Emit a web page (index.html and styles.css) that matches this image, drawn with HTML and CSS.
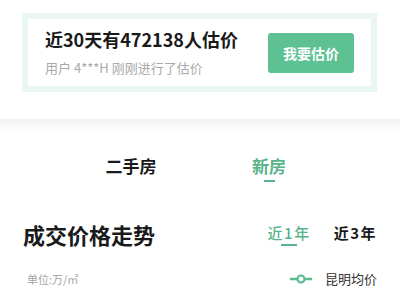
FILE: index.html
```html
<!DOCTYPE html>
<html lang="zh-CN">
<head>
<meta charset="utf-8">
<link rel="stylesheet" href="styles.css">
</head>
<body>
<div class="top">
  <div class="card">
    <div class="card-text">
      <div class="card-title">近30天有472138人估价</div>
      <div class="card-sub">用户 4***H 刚刚进行了估价</div>
    </div>
    <div class="btn">我要估价</div>
  </div>
</div>
<div class="band"></div>
<div class="tabs">
  <div class="tab">二手房</div>
  <div class="tab active">新房<span class="bar"></span></div>
</div>
<div class="trend-head">
  <div class="trend-title">成交价格走势</div>
  <div class="periods">
    <div class="period active">近1年<span class="pbar"></span></div>
    <div class="period">近3年</div>
  </div>
</div>
<div class="legend-row">
  <div class="unit">单位:万/㎡</div>
  <div class="legend">
    <svg class="legend-icon" width="22" height="10" viewBox="0 0 22 10">
      <line x1="0" y1="5" x2="22" y2="5" stroke="#5bbd8f" stroke-width="2.5"/>
      <circle cx="11" cy="5" r="3.5" fill="#fff" stroke="#5bbd8f" stroke-width="2.2"/>
    </svg>
    <span class="legend-text">昆明均价</span>
  </div>
</div>
</body>
</html>
```
FILE: styles.css
```css
* { box-sizing: border-box; }
html, body { margin: 0; background: #fff; }
body {
  font-family: "Noto Sans CJK SC", "Noto Sans", sans-serif;
  color: #1a1a1a;
  width: 400px;
  overflow: hidden;
}
.top { padding: 13px 23px 0 22px; }
.card {
  border: 6px solid #eaf6f1;
  height: 79px;
  display: flex;
  justify-content: space-between;
  align-items: center;
  padding: 0 17px 0 17px;
}
.card-text { align-self: flex-start; padding-top: 8px; }
.card-title {
  font-size: 18px;
  line-height: 24px;
  font-weight: 700;
  color: #1a1a1a;
}
.card-sub {
  margin-top: 8px;
  font-size: 13px;
  line-height: 18px;
  color: #a9a9a9;
}
.btn {
  width: 86px;
  height: 40px;
  border-radius: 3px;
  background: #5ec194;
  color: #fff;
  font-size: 14px;
  font-weight: 700;
  display: flex;
  align-items: center;
  justify-content: center;
}
.band {
  margin-top: 27px;
  height: 14px;
  background: linear-gradient(#f1f1f1, #fff);
}
.tabs {
  display: flex;
  padding: 21px 62px 0;
}
.tab {
  flex: 1;
  display: flex;
  flex-direction: column;
  align-items: center;
  font-size: 17px;
  line-height: 24px;
  font-weight: 700;
  color: #1a1a1a;
}
.tab.active { color: #5ab48b; }
.bar {
  width: 11px;
  height: 2px;
  margin-top: 2px;
  background: #5ab48b;
}
.trend-head {
  display: flex;
  justify-content: space-between;
  align-items: flex-start;
  padding: 37px 23px 0 23px;
}
.trend-title {
  font-size: 22px;
  line-height: 30px;
  font-weight: 700;
  color: #1a1a1a;
}
.periods {
  display: flex;
  gap: 23px;
  padding-top: 4px;
}
.period {
  display: flex;
  flex-direction: column;
  align-items: center;
  font-size: 15px;
  line-height: 20px;
  font-weight: 700;
  letter-spacing: 1.5px;
  color: #1a1a1a;
}
.period.active { color: #5ab48b; font-weight: 500; }
.pbar {
  width: 16px;
  height: 2px;
  margin-top: 1px;
  background: #5ab48b;
}
.legend-row {
  display: flex;
  justify-content: space-between;
  align-items: center;
  padding: 20px 23px 0 27px;
}
.unit {
  font-size: 11px;
  line-height: 20px;
  color: #a3a3a3;
}
.legend {
  display: flex;
  align-items: center;
  gap: 13px;
}
.legend-icon { display: block; }
.legend-text {
  font-size: 13px;
  line-height: 20px;
  color: #333;
}
```
